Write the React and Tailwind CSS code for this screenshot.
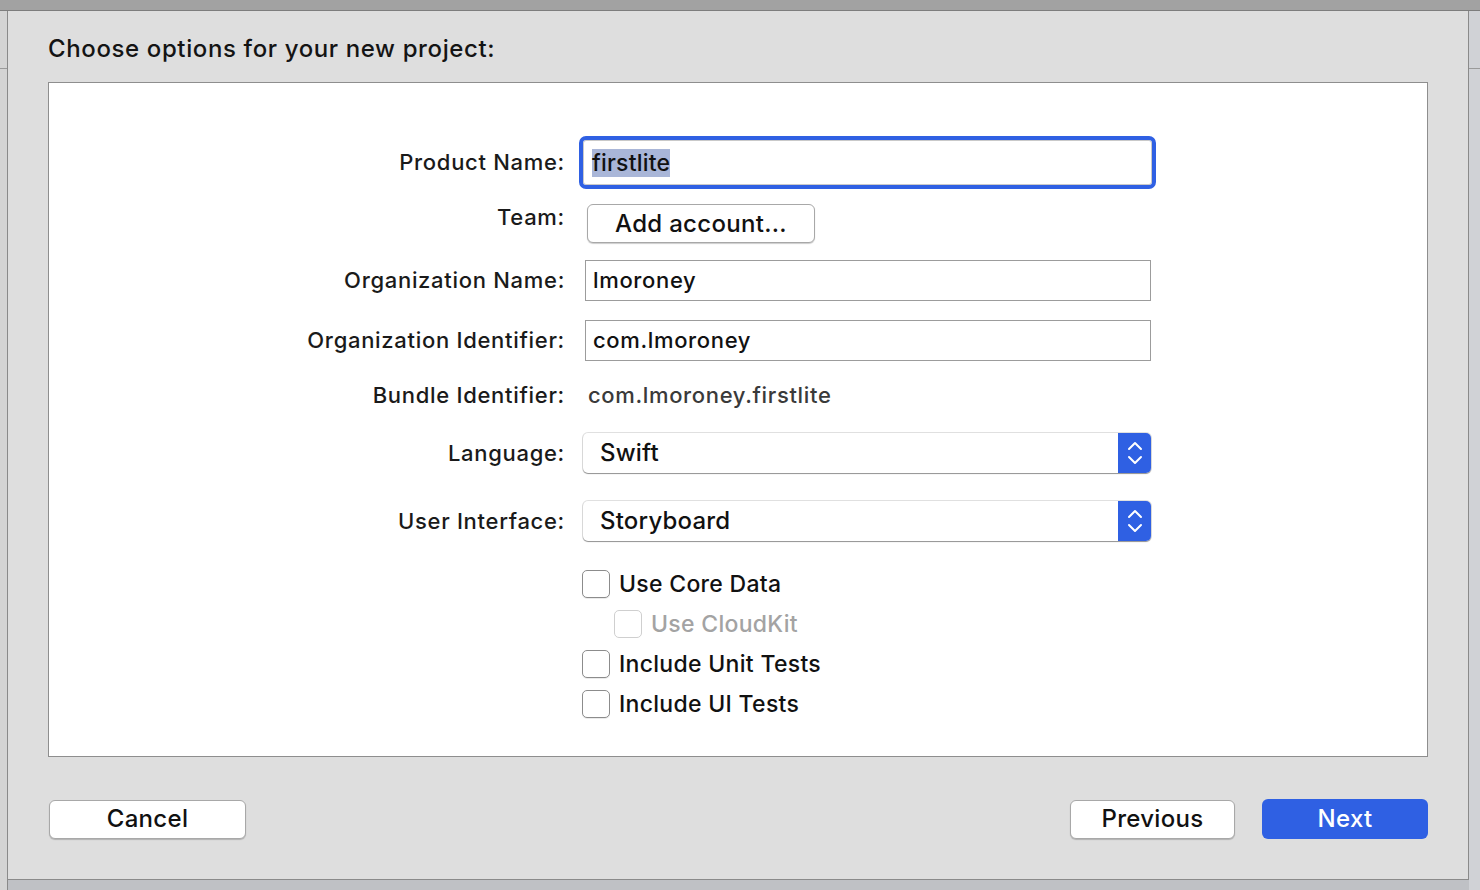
import React from "react";

const font = { fontFamily: "Inter, 'Liberation Sans', sans-serif" };

function Stepper() {
  return (
    <div className="flex h-full w-[33px] items-center justify-center rounded-r-[5px] bg-[#2f60e3]">
      <svg width="16" height="26" viewBox="0 0 16 26" fill="none" stroke="white" strokeWidth="2" strokeLinecap="round" strokeLinejoin="round">
        <path d="M2 9 L8 3 L14 9" />
        <path d="M2 17 L8 23 L14 17" />
      </svg>
    </div>
  );
}

function Popup({ value }) {
  return (
    <div className="flex h-[40px] w-[568px] items-stretch rounded-[5px] bg-white shadow-[0_1px_1px_rgba(0,0,0,0.35),0_0_0_1px_rgba(0,0,0,0.12)]">
      <div className="flex flex-1 items-center pl-[17px] text-[24px] tracking-[0.2px] text-[#111]">{value}</div>
      <Stepper />
    </div>
  );
}

function Checkbox({ label, disabled }) {
  return (
    <div className="flex h-[28px] items-center gap-[9px]">
      <div
        className={
          disabled
            ? "h-[28px] w-[28px] rounded-[5px] border border-[#cfcfcf] bg-white"
            : "h-[28px] w-[28px] rounded-[5px] border border-[#8c8c8c] bg-white shadow-[0_1px_0_rgba(0,0,0,0.08)]"
        }
      />
      <span className={disabled ? "text-[23px] tracking-[0.3px] text-[#a3a3a3]" : "text-[23px] tracking-[0.3px] text-[#111]"}>{label}</span>
    </div>
  );
}

function Label({ children, className = "" }) {
  return (
    <div className={"w-[516px] shrink-0 text-right text-[22px] tracking-[0.7px] text-[#1a1a1a] " + className}>{children}</div>
  );
}

export default function App() {
  return (
    <div className="flex h-[890px] w-[1480px] flex-col overflow-hidden bg-[#bfc1c5] font-medium" style={font}>
      <div className="h-[11px] shrink-0 border-b border-[#7d7d7d] bg-[#a2a2a2]" />
      <div className="flex flex-1">
        <div className="relative w-[8px] shrink-0 border-r border-[#8a8a8a] bg-[#d4d4d4]">
          <div className="absolute left-0 top-[57px] h-px w-full bg-[#9a9a9a]" />
        </div>
        <div className="flex h-[869px] w-[1461px] shrink-0 flex-col border-b border-r border-[#8a8a8a] bg-[#dedede] pl-[40px] pr-[40px]">
          <div className="pt-[24px] text-[24px] leading-[28px] tracking-[0.62px] text-[#141414]">Choose options for your new project:</div>
          <div className="mt-[19px] flex h-[675px] flex-col border border-[#8e8e8e] bg-white">
            {/* Product Name */}
            <div className="mt-[57px] flex h-[45px] items-center">
              <Label>Product Name:</Label>
              <div className="ml-[18px] flex h-[45px] w-[569px] items-center rounded-[3px] border border-[#c9c9c9] bg-white pl-[8px] outline-[4px] outline-solid outline-[#2f60e3]">
                <span className="bg-[#a9b6d8] text-[23px] leading-[28px] tracking-[0.2px] text-[#111]">firstlite</span>
              </div>
            </div>
            {/* Team */}
            <div className="mt-[19px] flex h-[39px] items-start">
              <Label className="leading-[26px]">Team:</Label>
              <button className="ml-[22px] h-[39px] w-[228px] rounded-[6px] border border-[#a8a8a8] bg-white text-[24px] tracking-[0.3px] text-[#111] shadow-[0_1px_1px_rgba(0,0,0,0.2)]">
                Add account...
              </button>
            </div>
            {/* Org Name */}
            <div className="mt-[17px] flex h-[41px] items-center">
              <Label>Organization Name:</Label>
              <div className="ml-[20px] flex h-[41px] w-[566px] items-center border border-[#9c9c9c] bg-white pl-[7px] text-[22px] tracking-[0.65px] text-[#111]">lmoroney</div>
            </div>
            {/* Org Identifier */}
            <div className="mt-[19px] flex h-[41px] items-center">
              <Label>Organization Identifier:</Label>
              <div className="ml-[20px] flex h-[41px] w-[566px] items-center border border-[#9c9c9c] bg-white pl-[7px] text-[22px] tracking-[0.65px] text-[#111]">com.lmoroney</div>
            </div>
            {/* Bundle */}
            <div className="mt-[19px] flex h-[30px] items-center">
              <Label>Bundle Identifier:</Label>
              <div className="ml-[23px] text-[22px] tracking-[0.65px] text-[#3a3a3a]">com.lmoroney.firstlite</div>
            </div>
            {/* Language */}
            <div className="mt-[23px] flex h-[40px] items-center">
              <Label>Language:</Label>
              <div className="ml-[18px]">
                <Popup value="Swift" />
              </div>
            </div>
            {/* UI */}
            <div className="mt-[28px] flex h-[40px] items-center">
              <Label>User Interface:</Label>
              <div className="ml-[18px]">
                <Popup value="Storyboard" />
              </div>
            </div>
            {/* Checkboxes */}
            <div className="ml-[533px] mt-[29px] flex flex-col gap-[12px]">
              <Checkbox label="Use Core Data" />
              <div className="ml-[32px]">
                <Checkbox label="Use CloudKit" disabled />
              </div>
              <Checkbox label="Include Unit Tests" />
              <Checkbox label="Include UI Tests" />
            </div>
          </div>
          <div className="mt-[42px] flex items-center">
            <button className="ml-[1px] h-[39px] w-[197px] rounded-[6px] border border-[#a8a8a8] bg-white text-[24px] tracking-[0.3px] text-[#111] shadow-[0_1px_1px_rgba(0,0,0,0.2)]">
              Cancel
            </button>
            <div className="flex-1" />
            <button className="h-[39px] w-[165px] rounded-[6px] border border-[#a8a8a8] bg-white text-[24px] tracking-[0.3px] text-[#111] shadow-[0_1px_1px_rgba(0,0,0,0.2)]">
              Previous
            </button>
            <button className="ml-[27px] h-[40px] w-[166px] rounded-[6px] bg-[#2f60e3] text-[24px] tracking-[0.3px] text-white">
              Next
            </button>
          </div>
        </div>
        <div className="relative flex-1 bg-[#d0d2d6]">
          <div className="absolute left-0 top-[57px] h-px w-full bg-[#9a9a9a]" />
        </div>
      </div>
    </div>
  );
}
